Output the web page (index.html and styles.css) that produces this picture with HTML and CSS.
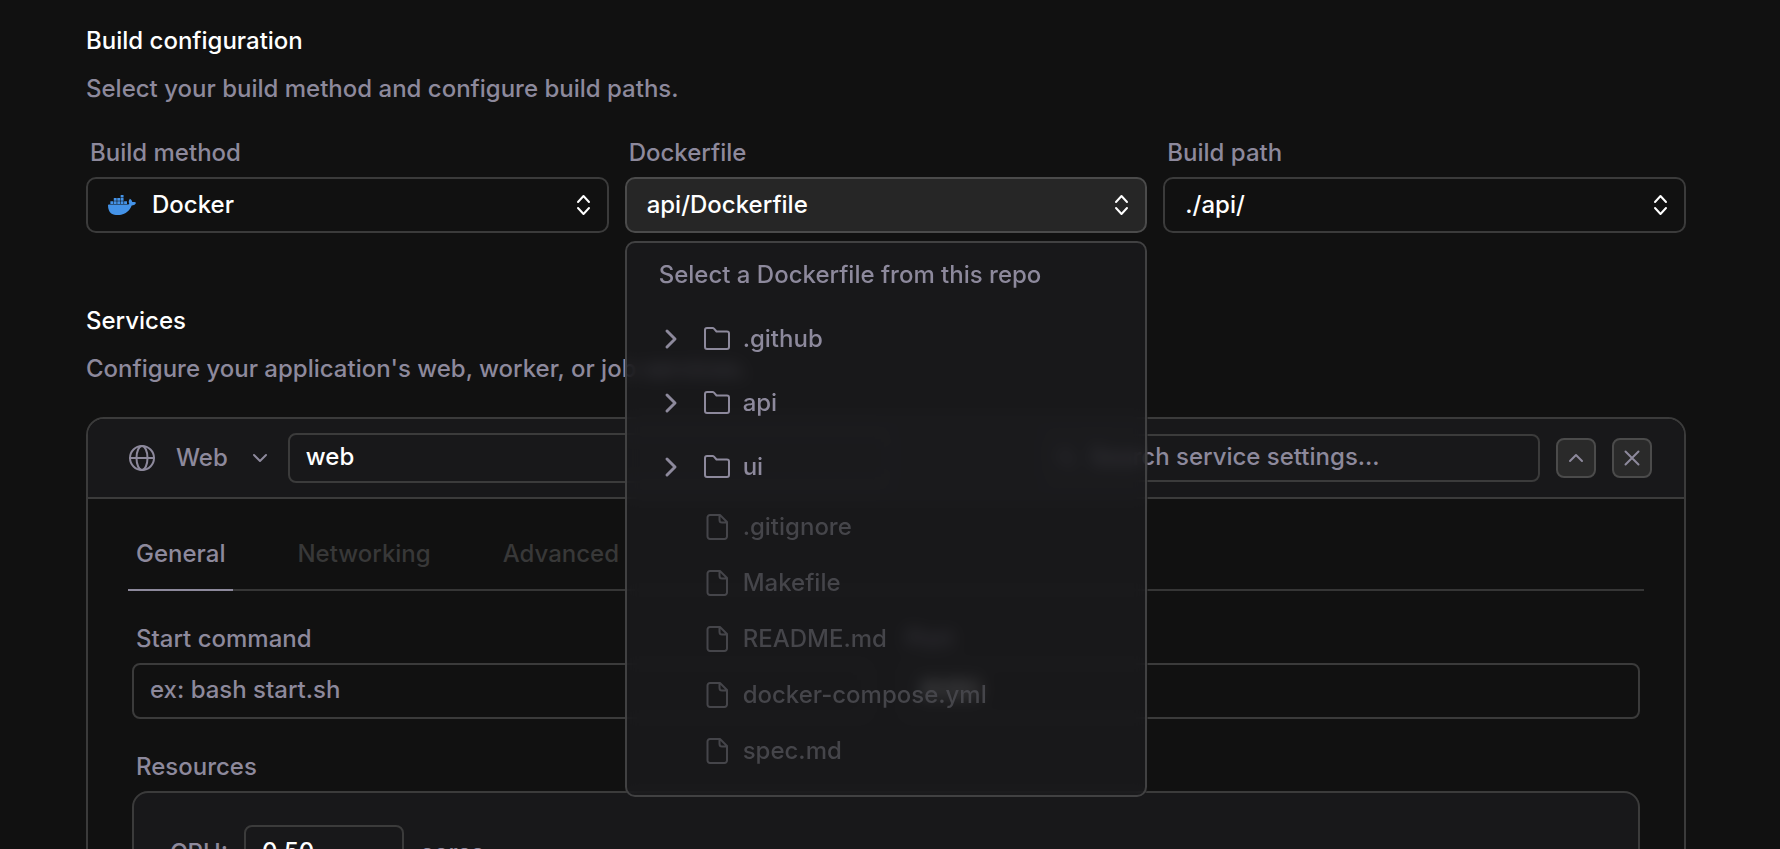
FILE: index.html
```html
<!DOCTYPE html>
<html lang="en">
  <head>
    <meta charset="utf-8" />
    <title>Build configuration</title>
    <link rel="stylesheet" href="styles.css">
  </head>
  <body>
    <svg class="sprite" aria-hidden="true">
      <symbol id="selector" viewBox="0 0 24 24">
        <path d="M6 9l5.500-6L17 9M6 15l5.500 6 5.500-6" />
      </symbol>
      <symbol id="chevron" viewBox="0 0 24 24">
        <path d="M8 4l8 8-8 8" />
      </symbol>
      <symbol id="folder" viewBox="0 0 28 28">
        <path d="M2 5a2 2 0 0 1 2-2h5.500a2 2 0 0 1 1.500.600L13.500 6.500H24a2 2 0 0 1 2 2V22a2 2 0 0 1-2 2H4a2 2 0 0 1-2-2z" />
      </symbol>
      <symbol id="file" viewBox="0 0 28 28">
        <path d="M17 2H7a2.500 2.500 0 0 0-2.500 2.500v19A2.500 2.500 0 0 0 7 26h14.500a2.500 2.500 0 0 0 2.500-2.500V9zM16.500 2v5a2.500 2.500 0 0 0 2.500 2.500H24" />
      </symbol>
    </svg>

    <main class="page">
      <section>
        <h2>Build configuration</h2>
        <p class="description">Select your build method and configure build paths.</p>
        <div class="build-fields">
          <div class="field">
            <label for="method">Build method</label>
            <div class="select has-logo">
              <select id="method">
                <option>Docker</option>
              </select>
              <svg class="logo" viewBox="0 0 24 24" aria-hidden="true">
                <path d="M13.983 11.078h2.119a.186.186 0 00.186-.185V9.006a.186.186 0 00-.186-.186h-2.119a.185.185 0 00-.185.185v1.888c0 .102.083.185.185.185m-2.954-5.430h2.118a.186.186 0 00.186-.186V3.574a.186.186 0 00-.186-.185h-2.118a.185.185 0 00-.185.185v1.888c0 .102.082.185.185.185m0 2.716h2.118a.187.187 0 00.186-.186V6.290a.186.186 0 00-.186-.185h-2.118a.185.185 0 00-.185.185v1.887c0 .102.082.185.185.186m-2.930 0h2.120a.186.186 0 00.184-.186V6.290a.185.185 0 00-.185-.185H8.100a.185.185 0 00-.185.185v1.887c0 .102.083.185.185.186m-2.964 0h2.119a.186.186 0 00.185-.186V6.290a.185.185 0 00-.185-.185H5.136a.186.186 0 00-.186.185v1.887c0 .102.084.185.186.186m5.893 2.715h2.118a.186.186 0 00.186-.185V9.006a.186.186 0 00-.186-.186h-2.118a.185.185 0 00-.185.185v1.888c0 .102.082.185.185.185m-2.930 0h2.120a.185.185 0 00.184-.185V9.006a.185.185 0 00-.184-.186h-2.120a.185.185 0 00-.184.185v1.888c0 .102.083.185.185.185m-2.964 0h2.119a.185.185 0 00.185-.185V9.006a.185.185 0 00-.184-.186h-2.120a.186.186 0 00-.186.186v1.887c0 .102.084.185.186.185m-2.920 0h2.120a.185.185 0 00.184-.185V9.006a.185.185 0 00-.184-.186h-2.120a.185.185 0 00-.184.185v1.888c0 .102.082.185.185.185M23.763 9.890c-.065-.051-.672-.510-1.954-.510-.338.001-.676.030-1.010.087-.248-1.700-1.653-2.530-1.716-2.566l-.344-.199-.226.327c-.284.438-.490.922-.612 1.430-.230.970-.090 1.882.403 2.661-.595.332-1.550.413-1.744.420H.751a.751.751 0 00-.750.748 11.376 11.376 0 00.692 4.062c.545 1.428 1.355 2.480 2.410 3.124 1.180.723 3.100 1.137 5.275 1.137.983.003 1.963-.086 2.930-.266a12.248 12.248 0 003.823-1.389c.980-.567 1.860-1.288 2.610-2.136 1.252-1.418 1.998-2.997 2.553-4.400h.221c1.372 0 2.215-.549 2.680-1.009.309-.293.550-.650.707-1.046l.098-.288z" />
              </svg>
              <svg class="icon caret"><use href="#selector" /></svg>
            </div>
          </div>

          <div class="field">
            <label for="dockerfile">Dockerfile</label>
            <div class="select is-open">
              <select id="dockerfile">
                <option>api/Dockerfile</option>
              </select>
              <svg class="icon caret"><use href="#selector" /></svg>
            </div>
            <div class="menu">
              <p class="menu-title">Select a Dockerfile from this repo</p>
              <button class="folder" type="button">
                <svg class="icon arrow"><use href="#chevron" /></svg>
                <svg class="icon kind"><use href="#folder" /></svg>
                .github
              </button>
              <button class="folder" type="button">
                <svg class="icon arrow"><use href="#chevron" /></svg>
                <svg class="icon kind"><use href="#folder" /></svg>
                api
              </button>
              <button class="folder" type="button">
                <svg class="icon arrow"><use href="#chevron" /></svg>
                <svg class="icon kind"><use href="#folder" /></svg>
                ui
              </button>
              <button class="file" type="button" disabled>
                <svg class="icon kind"><use href="#file" /></svg>
                .gitignore
              </button>
              <button class="file" type="button" disabled>
                <svg class="icon kind"><use href="#file" /></svg>
                Makefile
              </button>
              <button class="file" type="button" disabled>
                <svg class="icon kind"><use href="#file" /></svg>
                README.md
              </button>
              <button class="file" type="button" disabled>
                <svg class="icon kind"><use href="#file" /></svg>
                docker-compose.yml
              </button>
              <button class="file" type="button" disabled>
                <svg class="icon kind"><use href="#file" /></svg>
                spec.md
              </button>
            </div>
          </div>

          <div class="field">
            <label for="path">Build path</label>
            <div class="select">
              <select id="path">
                <option>./api/</option>
              </select>
              <svg class="icon caret"><use href="#selector" /></svg>
            </div>
          </div>
        </div>
      </section>

      <section class="services">
        <h2>Services</h2>
        <p class="description">Configure your application's web, worker, or job services.</p>

        <div class="service">
          <div class="service-header">
            <button class="service-type" type="button">
              <svg class="icon globe" viewBox="0 0 28 28">
                <circle cx="14" cy="14" r="12" />
                <ellipse cx="14" cy="14" rx="5.500" ry="12" />
                <path d="M2 14h24" />
              </svg>
              Web
              <svg class="icon down" viewBox="0 0 16 16"><path d="M2 5l6 6 6-6" /></svg>
            </button>
            <input class="input service-name" type="text" value="web" aria-label="Service name" />
            <div class="search">
              <svg class="icon search-icon" viewBox="0 0 24 24">
                <circle cx="10" cy="10" r="6" />
                <path d="M15 15l5 5" />
              </svg>
              <input class="input" type="text" placeholder="Search service settings..." aria-label="Search service settings" />
            </div>
            <button class="icon-button" type="button" aria-label="Collapse">
              <svg class="icon" viewBox="0 0 24 24"><path d="M6 15l6-6 6 6" /></svg>
            </button>
            <button class="icon-button" type="button" aria-label="Remove">
              <svg class="icon" viewBox="0 0 24 24"><path d="M5.500 5.500l13 13M18.500 5.500l-13 13" /></svg>
            </button>
          </div>

          <div class="service-body">
            <nav class="tabs">
              <a class="tab active" href="#general">General</a>
              <a class="tab" href="#networking">Networking</a>
              <a class="tab" href="#advanced">Advanced</a>
            </nav>

            <div class="service-fields">
              <div class="field">
                <label for="command">Start command</label>
                <input class="input" id="command" type="text" placeholder="ex: bash start.sh" />
              </div>
              <div class="field">
                <label for="port">Port</label>
                <input class="input" id="port" type="text" value="8080" />
              </div>
            </div>

            <div class="field resources">
              <span class="label">Resources</span>
              <div class="resource-panel">
                <label for="cpu">CPU:</label>
                <input class="input cpu" id="cpu" type="text" value="0.50" />
                <span>cores</span>
              </div>
            </div>
          </div>
        </div>
      </section>
    </main>
  </body>
</html>
```
FILE: styles.css
```css
* {
  box-sizing: border-box;
}

body {
  margin: 0;
  height: 100vh;
  overflow: hidden;
  background: #111111;
  color: #8d899c;
  font-family: Inter, sans-serif;
  font-size: 24px;
  font-weight: 500;
  line-height: 32px;
}

h2,
p {
  margin: 0;
}

h2 {
  color: #ffffff;
  font-size: 24px;
  font-weight: 500;
}

button,
input,
select {
  color: inherit;
  font: inherit;
}

.sprite {
  display: none;
}

.icon {
  flex: none;
  width: 24px;
  height: 24px;
  fill: none;
  stroke: currentColor;
  stroke-width: 2;
  stroke-linecap: round;
  stroke-linejoin: round;
}

.page {
  padding: 25px 94px 0 86px;
}

.description {
  margin: 16px 0 32px;
}

/* form fields */
.field {
  position: relative;
  display: flex;
  flex-direction: column;
  gap: 8px;
  min-width: 0;
}

.field > label,
.label {
  padding-left: 4px;
}

.build-fields {
  display: grid;
  grid-template-columns: repeat(3, 1fr);
  gap: 16px;
}

.select {
  display: grid;
  align-items: center;
  color: #ffffff;
}

.select > * {
  grid-area: 1 / 1;
}

.select select {
  width: 100%;
  height: 56px;
  padding: 0 20px;
  border: 2px solid #3b3b3b;
  border-radius: 10px;
  background: transparent;
  appearance: none;
}

.select.has-logo select {
  padding-left: 64px;
}

.select.is-open select {
  border-color: #4b4b4b;
  background: #262626;
}

.logo {
  width: 28px;
  height: 28px;
  margin-left: 22px;
  fill: #4493e8;
  pointer-events: none;
}

.caret {
  justify-self: end;
  margin-right: 13px;
  pointer-events: none;
}

.input {
  width: 100%;
  height: 56px;
  padding: 0 16px 4px;
  border: 2px solid #3b3b3b;
  border-radius: 8px;
  background: transparent;
  color: #ffffff;
}

.input::placeholder {
  color: #8d899c;
  opacity: 1;
}

/* dockerfile menu */
.menu {
  position: absolute;
  top: 104px;
  left: 0;
  right: 0;
  z-index: 1;
  padding-bottom: 16px;
  border: 2px solid #414142;
  border-radius: 10px;
  background: rgba(27, 27, 30, 0.75);
  backdrop-filter: blur(8px);
}

.menu-title {
  padding: 16px 32px;
}

.menu button {
  display: flex;
  align-items: center;
  width: 100%;
  height: 64px;
  padding: 0 32px;
  gap: 12px;
  border: 0;
  background: none;
  text-align: left;
}

.menu .kind {
  width: 28px;
  height: 28px;
}

.arrow {
  stroke-width: 3;
}

.folder .kind {
  margin-left: 8px;
}

.menu .file {
  height: 56px;
  padding-left: 76px;
  color: #45454a;
}

/* services */
.services {
  margin-top: 72px;
}

.service {
  border: 2px solid #3b3b3b;
  border-radius: 18px;
}

.service-header {
  display: flex;
  align-items: center;
  gap: 16px;
  padding: 14px 32px 14px 40px;
  border-bottom: 2px solid #3b3b3b;
  border-radius: 16px 16px 0 0;
  background: #18181a;
}

.service-type {
  display: flex;
  align-items: center;
  padding: 0;
  border: 0;
  background: none;
}

.globe {
  width: 28px;
  height: 28px;
  margin-right: 20px;
}

.down {
  width: 16px;
  height: 16px;
  margin: 0 4px 0 24px;
}

.service-name {
  flex: 0 1 604px;
  height: 50px;
  min-width: 0;
}

.search {
  display: grid;
  flex: 0 1 497px;
  align-items: center;
  margin-left: auto;
}

.search > * {
  grid-area: 1 / 1;
}

.search .input {
  height: 48px;
  padding-left: 44px;
}

.search-icon {
  margin-left: 12px;
}

.icon-button {
  display: grid;
  place-items: center;
  width: 40px;
  height: 40px;
  padding: 0;
  border: 2px solid #4b4b4b;
  border-radius: 8px;
  background: #2a2a2a;
}

.service-body {
  padding: 32px 40px;
}

.tabs {
  display: flex;
  gap: 56px;
  border-bottom: 2px solid #363636;
}

.tab {
  margin-bottom: -2px;
  padding: 7px 8px 19px;
  border-bottom: 2px solid transparent;
  color: #383838;
  text-decoration: none;
}

.tab.active {
  border-color: #8d899c;
  color: #8d899c;
}

.service-fields {
  display: grid;
  grid-template-columns: 1fr 1fr;
  gap: 32px;
  padding: 32px 4px;
}

.resources {
  padding: 0 4px;
}

.resource-panel {
  display: flex;
  align-items: center;
  gap: 16px;
  padding: 32px 36px;
  border: 2px solid #3b3b3b;
  border-radius: 16px;
  background: #18181a;
}

.cpu {
  width: 160px;
}
```
